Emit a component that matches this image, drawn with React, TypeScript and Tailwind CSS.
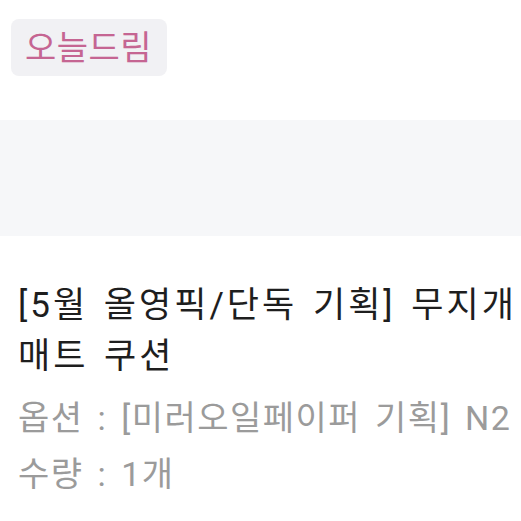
import React from 'react';

const App: React.FC = () => {
  const font = { fontFamily: 'Roboto, "Noto Sans CJK KR", sans-serif' };
  return <div className="w-[521px] h-[521px] bg-white overflow-hidden" style={font}>
      <div className="pt-[19px] pl-[11px]">
        <span className="inline-flex items-center h-[57px] pl-[14px] pr-[15px] rounded-lg bg-[#f1f1f4] text-[34px] tracking-[0.5px] text-[#c56592] leading-none">
          오늘드림
        </span>
      </div>
      <div className="mt-[44px] h-[116px] bg-[#f6f7f9]" />
      <div className="pl-[18px] pt-[44px]">
        <h1 className="text-[35px] leading-[51px] tracking-[3px] [word-spacing:4px] text-[#1e1e1e] font-normal">
          [5월 올영픽/단독 기획] 무지개 매트 쿠션
        </h1>
        <div className="mt-[8px] text-[34px] leading-[56px] tracking-[1.5px] [word-spacing:4px] text-[#9b9b9b] whitespace-nowrap">
          <p>옵션 : [미러오일페이퍼 기획] N2 쉐어 미러 오일페이퍼</p>
          <p>수량 : 1개</p>
        </div>
      </div>
    </div>;
};

export default App;
